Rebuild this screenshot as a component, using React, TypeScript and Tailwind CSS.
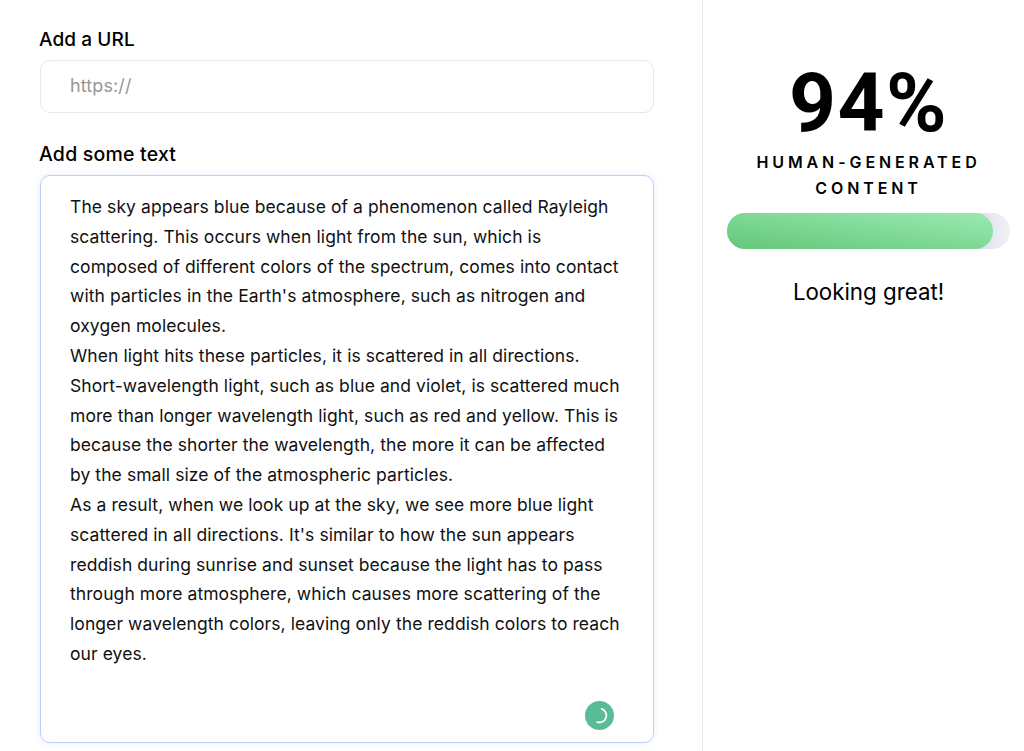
import React from 'react';

const lines = [
  'The sky appears blue because of a phenomenon called Rayleigh',
  'scattering. This occurs when light from the sun, which is',
  'composed of different colors of the spectrum, comes into contact',
  "with particles in the Earth's atmosphere, such as nitrogen and",
  'oxygen molecules.',
  'When light hits these particles, it is scattered in all directions.',
  'Short-wavelength light, such as blue and violet, is scattered much',
  'more than longer wavelength light, such as red and yellow. This is',
  'because the shorter the wavelength, the more it can be affected',
  'by the small size of the atmospheric particles.',
  'As a result, when we look up at the sky, we see more blue light',
  "scattered in all directions. It's similar to how the sun appears",
  'reddish during sunrise and sunset because the light has to pass',
  'through more atmosphere, which causes more scattering of the',
  'longer wavelength colors, leaving only the reddish colors to reach',
  'our eyes.',
];

export default function App() {
  return (
    <div className="flex h-[751px] w-[1024px] overflow-hidden bg-white font-['Inter',sans-serif] text-black">
      {/* Input column */}
      <div className="w-[703px] shrink-0 border-r border-[#e9ebf2] pl-10 pr-12 pt-[28px]">
        <div className="-ml-px text-[19px] leading-6 font-medium tracking-[0.1px]">Add a URL</div>
        <div className="mt-2 flex h-[53px] w-[614px] items-center rounded-[10px] border border-[#e4e6f0] pb-0.5 pl-[29px] text-[18px] tracking-[0.1px] text-[#969696]">
          https://
        </div>
        <div className="mt-[29px] -ml-px text-[19.5px] leading-6 font-medium tracking-[0.2px]">Add some text</div>
        <div className="relative mt-[9px] h-[568px] w-[614px] rounded-[10px] border-[1.5px] border-[#c0ccfd] pl-[29px] pt-[16px] shadow-[0_0_6px_rgba(188,202,255,0.35)]">
          {lines.map((line, i) => (
            <div key={i} className="text-[17.5px] leading-[29.8px] tracking-[0.08px] whitespace-nowrap text-[#111111]">
              {line}
            </div>
          ))}
          <div className="absolute right-[39px] bottom-[12px] flex h-[29px] w-[29px] items-center justify-center rounded-full bg-[#58bd97]">
            <svg width="17" height="17" viewBox="0 0 17 17" fill="none">
              <path d="M10.66 1.84A7 7 0 0 1 6.11 15.08" stroke="white" strokeWidth="1.8" strokeLinecap="round" />
            </svg>
          </div>
        </div>
      </div>

      {/* Score column */}
      <div className="flex-1 pt-[63px]">
        <div className="pl-[10px] text-center font-['Roboto',sans-serif] text-[82px] leading-[80px] font-bold tracking-[1.5px]">94%</div>
        <div className="mt-[6px] pl-[10px] text-center text-[16px] leading-[26px] font-semibold tracking-[3.9px]">
          HUMAN-GENERATED
          <br />
          CONTENT
        </div>
        <div className="mt-[12px] ml-[24px] h-9 w-[283px] rounded-full bg-gradient-to-r from-[#dfe2ec] from-90% to-[#f1f2f6]">
          <div className="h-9 w-[266px] rounded-full bg-gradient-to-tr from-[#62c777] to-[#9aeab3]" />
        </div>
        <div className="mt-[28px] pl-[10px] text-center text-[22.3px] leading-[30px]">Looking great!</div>
      </div>
    </div>
  );
}
